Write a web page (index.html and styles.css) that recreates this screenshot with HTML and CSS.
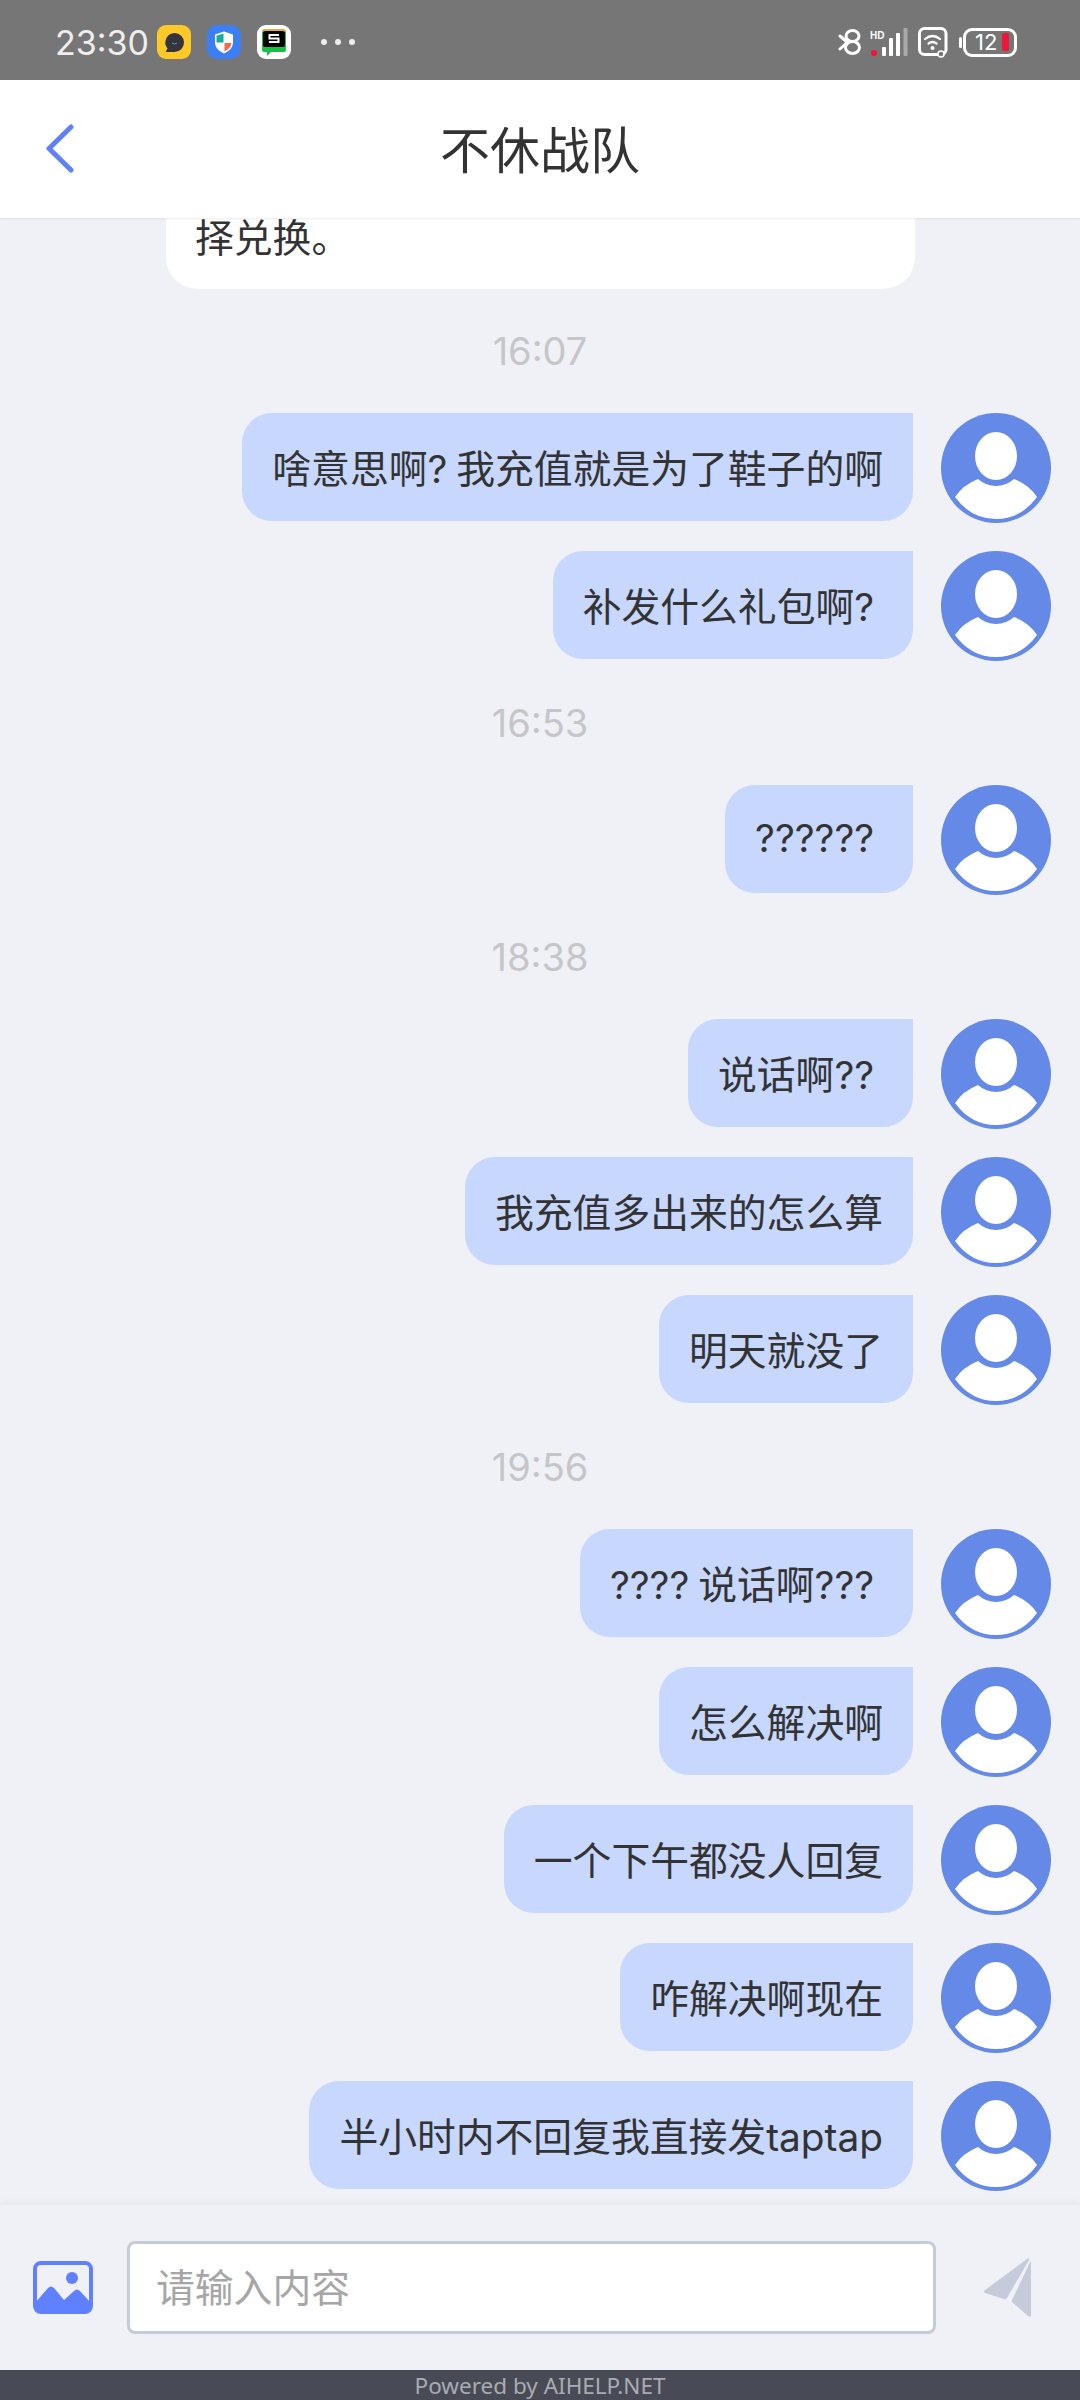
FILE: index.html
```html
<!DOCTYPE html>
<html lang="zh">
<head>
  <meta charset="UTF-8">
  <meta name="viewport" content="width=device-width, initial-scale=1.0">
  <title>不休战队</title>
  <link rel="stylesheet" href="styles.css">
</head>
<body>
  <svg class="defs" width="0" height="0">
    <symbol id="avatar" viewBox="0 0 110 110">
      <circle cx="55" cy="55" r="55" fill="#6489e6"/>
      <ellipse cx="55" cy="43" rx="21" ry="24" fill="#fff"/>
      <path d="M14 84Q22 72 37 66Q45 73 55 73Q65 73 73 66Q88 72 96 84Q80 106 55 106Q30 106 14 84Z" fill="#fff"/>
    </symbol>
  </svg>

  <div class="status-bar">
    <span class="clock">23:30</span>
    <svg class="app-icon" viewBox="0 0 34 34">
      <rect width="34" height="34" rx="9" fill="#fdc928"/>
      <path d="M17.500 8a9.500 9.500 0 0 1 0 19H8.500l2-3.500a9.500 9.500 0 0 1 7-15.500Z" fill="#34343a"/>
      <path d="M15 18q2.500 2 5 0" fill="none" stroke="#3aa6d8" stroke-width="1"/>
    </svg>
    <svg class="app-icon" viewBox="0 0 34 34">
      <rect width="34" height="34" rx="10" fill="#3c7ff5"/>
      <path d="M17 6.500l9 3v8q0 7-9 11q-9-4-9-11v-8Z" fill="#fff"/>
      <path d="M16.500 8.500l-7 2.300v6.700h7Z" fill="#17ab9b"/>
      <path d="M17.500 18v8.500q6-3 7-8.500Z" fill="#f2694b"/>
    </svg>
    <svg class="app-icon" viewBox="0 0 34 34">
      <rect width="34" height="34" rx="9" fill="#fff"/>
      <path d="M5 7q0-2 2-2h20q2 0 2 2v18q0 2-2 2H14l-4 4v-4H7q-2 0-2-2Z" fill="#14c244"/>
      <rect x="6" y="6" width="22" height="16" rx="2" fill="#000"/>
      <path d="M6 6.500q0-1.500 2-1.500h18q2 0 2 1.500" fill="none" stroke="#e8a93c" stroke-width="2"/>
      <path d="M22 10h-9.500v3.500h9v3.500H12" fill="none" stroke="#fff" stroke-width="2"/>
    </svg>
    <span class="more-dots"><i></i><i></i><i></i></span>
    <span class="status-right">
      <svg class="bt-icon" viewBox="0 0 24 26">
        <path d="M2 7l6.500 5.500M2 20l6.500-6" fill="none" stroke="#fff" stroke-width="3" stroke-linecap="round"/>
        <ellipse cx="14.500" cy="7" rx="6.500" ry="5.500" fill="none" stroke="#fff" stroke-width="3"/>
        <ellipse cx="14.500" cy="18.500" rx="7" ry="6" fill="none" stroke="#fff" stroke-width="3"/>
      </svg>
      <svg class="signal-icon" viewBox="0 0 39 30">
        <text x="1" y="12" class="hd-text">HD</text>
        <circle cx="5" cy="26" r="3" fill="#f0163a"/>
        <rect x="13" y="20" width="4" height="9" rx="1" fill="#fff"/>
        <rect x="20" y="11" width="4" height="18" rx="1" fill="#fff"/>
        <rect x="27" y="6" width="4" height="23" rx="1" fill="#fff"/>
        <rect x="34.500" y="1" width="4" height="28" rx="1" fill="#aaa"/>
      </svg>
      <svg class="wifi-icon" viewBox="0 0 30 31">
        <rect x="1.500" y="1.500" width="26.500" height="26" rx="5" fill="none" stroke="#fff" stroke-width="3"/>
        <path d="M7 12q7.500-6 15 0M10.500 16.500q4-3 8 0" fill="none" stroke="#fff" stroke-width="2.200" stroke-linecap="round"/>
        <circle cx="14.500" cy="21" r="2" fill="#fff"/>
        <circle cx="23" cy="27" r="3" fill="#767676" stroke="#fff" stroke-width="1.500"/>
      </svg>
      <span class="battery"><span class="battery-num">12</span><i class="battery-fill"></i></span>
    </span>
  </div>

  <header class="top-bar">
    <svg class="back-icon" viewBox="0 0 30 49">
      <path d="M26 3L4 24.500 26 46" fill="none" stroke="#5f81f5" stroke-width="5" stroke-linecap="round" stroke-linejoin="round"/>
    </svg>
    <h1>不休战队</h1>
  </header>

  <main class="chat">
    <div class="card">择兑换。</div>
    <div class="time">16:07</div>
    <div class="msg"><div class="bubble">啥意思啊? 我充值就是为了鞋子的啊</div><svg class="avatar"><use href="#avatar"/></svg></div>
    <div class="msg"><div class="bubble">补发什么礼包啊? </div><svg class="avatar"><use href="#avatar"/></svg></div>
    <div class="time">16:53</div>
    <div class="msg"><div class="bubble">?????? </div><svg class="avatar"><use href="#avatar"/></svg></div>
    <div class="time">18:38</div>
    <div class="msg"><div class="bubble">说话啊?? </div><svg class="avatar"><use href="#avatar"/></svg></div>
    <div class="msg"><div class="bubble">我充值多出来的怎么算</div><svg class="avatar"><use href="#avatar"/></svg></div>
    <div class="msg"><div class="bubble">明天就没了</div><svg class="avatar"><use href="#avatar"/></svg></div>
    <div class="time">19:56</div>
    <div class="msg"><div class="bubble">???? 说话啊??? </div><svg class="avatar"><use href="#avatar"/></svg></div>
    <div class="msg"><div class="bubble">怎么解决啊</div><svg class="avatar"><use href="#avatar"/></svg></div>
    <div class="msg"><div class="bubble">一个下午都没人回复</div><svg class="avatar"><use href="#avatar"/></svg></div>
    <div class="msg"><div class="bubble">咋解决啊现在</div><svg class="avatar"><use href="#avatar"/></svg></div>
    <div class="msg"><div class="bubble">半小时内不回复我直接发taptap</div><svg class="avatar"><use href="#avatar"/></svg></div>
  </main>

  <div class="composer">
    <svg class="image-icon" viewBox="0 0 60 53">
      <rect x="2" y="2" width="56" height="49" rx="6" fill="none" stroke="#5f81ff" stroke-width="4"/>
      <path d="M2 42L15 27Q18 24 21 27L31 39 41 30Q44 27 47 30L58 42V46Q58 51 53 51H7Q2 51 2 46Z" fill="#5f81ff"/>
      <circle cx="39" cy="17" r="6" fill="#5f81ff"/>
    </svg>
    <input class="text-input" type="text" placeholder="请输入内容">
    <svg class="send-icon" viewBox="0 0 50 62">
      <path d="M2 33L44 2Q47 0 46 3L24 41Q23 43 21 42L2 36Q0 35 2 33Z" fill="#c5cbdb"/>
      <path d="M29 43L41 18 47 5Q48 3 48 6V58Q48 61 45 59L29 45Q28 44 29 43Z" fill="#c5cbdb"/>
    </svg>
  </div>
  <footer class="powered">Powered by AIHELP.NET</footer>
</body>
</html>
```

FILE: styles.css
```css
* {
  box-sizing: border-box;
}
html, body {
  height: 100%;
}
body {
  margin: 0;
  height: 2400px;
  display: flex;
  flex-direction: column;
  overflow: hidden;
  background: #eff1f7;
  color: #333;
  font-family: Inter, "Noto Sans CJK SC", sans-serif;
}
.defs {
  position: absolute;
}

.status-bar {
  height: 80px;
  flex: none;
  display: flex;
  align-items: center;
  padding: 24px 63px 20px 55px;
  background: #767676;
  color: #eee;
}
.clock {
  font-size: 34px;
  margin-right: 8px;
}
.app-icon {
  width: 34px;
  height: 34px;
  margin-right: 16px;
}
.more-dots {
  display: flex;
  gap: 8px;
  margin-left: 14px;
}
.more-dots i {
  width: 6px;
  height: 6px;
  border-radius: 50%;
  background: #eee;
}
.status-right {
  margin-left: auto;
  display: flex;
  align-items: center;
}
.bt-icon {
  width: 24px;
  height: 26px;
  margin-right: 7px;
}
.signal-icon {
  width: 39px;
  height: 30px;
  margin-right: 10px;
}
.hd-text {
  font: bold 10px "Liberation Sans", sans-serif;
  fill: #fff;
}
.wifi-icon {
  width: 30px;
  height: 31px;
  margin-right: 15px;
}
.battery {
  position: relative;
  width: 54px;
  height: 29px;
  border: 3px solid #fff;
  border-radius: 9px;
  display: flex;
  align-items: center;
  padding: 0 3px 0 9px;
  color: #fff;
}
.battery::before {
  content: "";
  position: absolute;
  left: -7px;
  top: 6px;
  width: 3px;
  height: 11px;
  border-radius: 2px;
  background: #fff;
}
.battery-num {
  font-size: 22px;
  line-height: 22px;
  margin-right: 5px;
}
.battery-fill {
  width: 7px;
  height: 18px;
  border-radius: 2px;
  background: #f0163a;
}

.top-bar {
  height: 138px;
  flex: none;
  position: relative;
  z-index: 1;
  display: flex;
  align-items: center;
  justify-content: center;
  padding-bottom: 4px;
  background: #fff;
  box-shadow: 0 1px 2px rgba(0, 0, 0, 0.08);
}
.top-bar h1 {
  margin: 0;
  font-size: 50px;
  font-weight: 400;
}
.back-icon {
  position: absolute;
  left: 45px;
  top: 44px;
  width: 30px;
  height: 49px;
}

.chat {
  flex: 1;
  min-height: 0;
  display: flex;
  flex-direction: column;
  justify-content: flex-end;
  gap: 28px;
  padding: 0 29px 14px 0;
  overflow: hidden;
}
.card {
  flex: none;
  align-self: flex-end;
  width: 749px;
  margin-right: 136px;
  padding: 80px 29px 24px;
  border-radius: 32px;
  background: #fff;
  font-size: 38.800px;
  line-height: 54px;
}
.time {
  flex: none;
  height: 68px;
  display: flex;
  align-items: center;
  justify-content: center;
  padding-left: 29px;
  font-size: 38px;
  color: #c6c6c8;
}
.msg {
  flex: none;
  display: flex;
  justify-content: flex-end;
  gap: 28px;
  height: 110px;
}
.bubble {
  height: 108px;
  padding: 0 30px 3px;
  display: flex;
  align-items: center;
  border-radius: 30px 0 30px 30px;
  background: #c7d7fd;
  font-size: 38.800px;
  word-spacing: -2px;
  white-space: pre;
}
.avatar {
  width: 110px;
  height: 110px;
  flex: none;
}

.composer {
  height: 165px;
  flex: none;
  display: flex;
  align-items: center;
  padding: 0 47px 0 33px;
  background: #eff1f7;
  box-shadow: 0 -3px 6px rgba(0, 0, 0, 0.04);
  position: relative;
}
.image-icon {
  width: 60px;
  height: 53px;
  flex: none;
}
.text-input {
  width: 809px;
  height: 93px;
  margin: 0 47px 0 34px;
  padding: 0 26px;
  border: 3px solid #c4ccd8;
  border-radius: 8px;
  background: #fff;
  font-family: inherit;
  font-size: 38.800px;
  outline: none;
}
.text-input::placeholder {
  color: #a6a6a6;
}
.send-icon {
  width: 50px;
  height: 62px;
  flex: none;
}
.powered {
  height: 30px;
  flex: none;
  display: flex;
  align-items: center;
  justify-content: center;
  background: #484b55;
  color: #a9abb2;
  font-family: "Noto Sans", sans-serif;
  font-size: 22.500px;
}
```
